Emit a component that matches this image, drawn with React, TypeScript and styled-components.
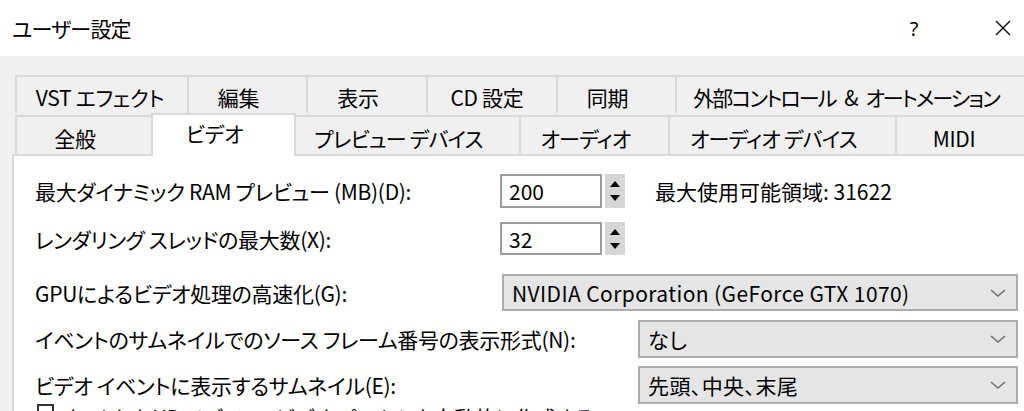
import React from "react";
import styled, { createGlobalStyle } from "styled-components";

const Global = createGlobalStyle`
  html, body { margin: 0; padding: 0; background: #ffffff; overflow: hidden; }
  body { font-family: "Noto Sans CJK JP", "Noto Sans", sans-serif; }
`;

const Window = styled.div`
  width: 1024px;
  height: 411px;
  overflow: hidden;
  display: flex;
  flex-direction: column;
  background: #f0f0f0;
  font-family: "Noto Sans CJK JP", "Noto Sans", sans-serif;
  font-feature-settings: "palt";
  color: #000;
`;

const TitleBar = styled.div`
  height: 56px;
  flex: 0 0 56px;
  background: #ffffff;
  display: flex;
  align-items: center;
  padding-left: 12px;
`;

const Title = styled.div`
  font-size: 21px;
  flex: 1;
  letter-spacing: -0.8px;
`;

const HelpButton = styled.div`
  width: 30px;
  text-align: center;
  font-size: 20px;
  margin-right: 64px;
  font-family: "Noto Sans", sans-serif;
`;

const CloseButton = styled.div`
  width: 20px;
  height: 20px;
  margin-right: 11px;
  display: flex;
  align-items: center;
  justify-content: center;
`;

const Body = styled.div`
  flex: 1;
  display: flex;
  flex-direction: column;
  padding: 19px 0 0 12px;
  min-height: 0;
`;

const TabStrip = styled.div`
  display: flex;
  flex-direction: column;
  margin-left: 3px;
`;

const TabRow = styled.div`
  display: flex;
  align-items: flex-end;
  white-space: nowrap;
`;

const Tab = styled.div<{ $w: number; $h: number; $selected?: boolean; $ls?: number; $pr?: number; $ws?: number }>`
  box-sizing: border-box;
  flex: 0 0 ${(p) => p.$w}px;
  width: ${(p) => p.$w}px;
  height: ${(p) => p.$h}px;
  border-top: 2px solid #d9d9d9;
  border-left: 2px solid #d9d9d9;
  border-right: ${(p) => (p.$selected ? "2px solid #d9d9d9" : "none")};
  background: ${(p) => (p.$selected ? "#ffffff" : "#f0f0f0")};
  margin-right: ${(p) => (p.$selected ? -2 : 0)}px;
  margin-bottom: ${(p) => (p.$selected ? -2 : 0)}px;
  position: ${(p) => (p.$selected ? "relative" : "static")};
  z-index: ${(p) => (p.$selected ? 2 : 0)};
  display: flex;
  align-items: center;
  justify-content: center;
  padding: ${(p) => (p.$selected ? `0 ${p.$pr ?? 18}px 6px 0` : `4px ${p.$pr ?? 18}px 0 0`)};
  font-size: 21px;
  letter-spacing: ${(p) => p.$ls ?? -0.3}px;
  word-spacing: ${(p) => p.$ws ?? 0}px;
`;

const Panel = styled.div`
  flex: 1;
  background: #ffffff;
  border-top: 2px solid #d9d9d9;
  border-left: 2px solid #d9d9d9;
  display: flex;
  flex-direction: column;
  padding: 18px 0 0 21px;
  position: relative;
  z-index: 1;
`;

const Row = styled.div<{ $h: number; $mt: number }>`
  display: flex;
  align-items: center;
  height: ${(p) => p.$h}px;
  margin-top: ${(p) => p.$mt}px;
  white-space: nowrap;
`;

const Label = styled.div<{ $w: number }>`
  flex: 0 0 ${(p) => p.$w}px;
  font-size: 21px;
  letter-spacing: -0.3px;
`;

const SpinInput = styled.div`
  box-sizing: border-box;
  width: 102px;
  height: 100%;
  border: 2px solid #9c9c9c;
  background: #fff;
  display: flex;
  align-items: center;
  padding-left: 7px;
  font-size: 21px;
`;

const SpinButtons = styled.div`
  width: 20px;
  height: 100%;
  margin-left: 3px;
  background: #d6d6d6;
  display: flex;
  flex-direction: column;
  align-items: center;
  justify-content: center;
  gap: 8px;
`;

const Info = styled.div`
  margin-left: 30px;
  font-size: 21px;
`;

const Combo = styled.div<{ $w: number }>`
  box-sizing: border-box;
  width: ${(p) => p.$w}px;
  height: 100%;
  background: #e5e5e5;
  border: 2px solid #adadad;
  display: flex;
  align-items: center;
  padding: 0 10px 0 8px;
  font-size: 21px;
`;

const ComboText = styled.div`
  flex: 1;
  letter-spacing: 0.4px;
`;

const CheckRow = styled.div`
  display: flex;
  align-items: flex-start;
  margin-left: 2px;
  white-space: nowrap;
`;

const CheckBox = styled.div`
  box-sizing: border-box;
  width: 17px;
  height: 17px;
  border: 2px solid #333;
  background: #fff;
`;

const CheckLabel = styled.div`
  margin-left: 10px;
  margin-top: -2px;
  font-size: 21px;
  letter-spacing: -0.4px;
`;

const Chevron = () => (
  <svg width="16" height="10" viewBox="0 0 16 10">
    <polyline points="1,2 8,8 15,2" fill="none" stroke="#707070" strokeWidth="1.6" />
  </svg>
);

const UpArrow = () => (
  <svg width="10" height="6" viewBox="0 0 10 6">
    <polygon points="5,0 10,6 0,6" fill="#000" />
  </svg>
);

const DownArrow = () => (
  <svg width="10" height="6" viewBox="0 0 10 6">
    <polygon points="0,0 10,0 5,6" fill="#000" />
  </svg>
);

type TabDef = { t: string; w: number; s?: boolean; ls?: number; pr?: number; ws?: number };

const topTabs: TabDef[] = [
  { t: "VST エフェクト", w: 172, pr: 4 },
  { t: "編集", w: 119 },
  { t: "表示", w: 120 },
  { t: "CD 設定", w: 130, pr: 10 },
  { t: "同期", w: 119 },
  { t: "外部コントロール & オートメーション", w: 400, ls: -1.9, pr: 60, ws: 6 },
];

const bottomTabs: TabDef[] = [
  { t: "全般", w: 136 },
  { t: "ビデオ", w: 145, s: true },
  { t: "プレビュー デバイス", w: 225, ls: -0.8 },
  { t: "オーディオ", w: 149, ls: -0.8 },
  { t: "オーディオ デバイス", w: 227, ls: -0.8 },
  { t: "MIDI", w: 140, pr: 24 },
];

export default function App() {
  return (
    <>
      <Global />
      <Window>
        <TitleBar>
          <Title>ユーザー設定</Title>
          <HelpButton>?</HelpButton>
          <CloseButton>
            <svg width="16" height="16" viewBox="0 0 16 16">
              <line x1="1" y1="1" x2="15" y2="15" stroke="#111" strokeWidth="1.4" />
              <line x1="15" y1="1" x2="1" y2="15" stroke="#111" strokeWidth="1.4" />
            </svg>
          </CloseButton>
        </TitleBar>
        <Body>
          <TabStrip>
            <TabRow>
              {topTabs.map((d) => (
                <Tab key={d.t} $w={d.w} $h={38} $ls={d.ls} $pr={d.pr} $ws={d.ws}>
                  {d.t}
                </Tab>
              ))}
            </TabRow>
            <TabRow>
              {bottomTabs.map((d) => (
                <Tab key={d.t} $w={d.w} $h={d.s ? 43 : 39} $selected={d.s} $ls={d.ls} $pr={d.pr} $ws={d.ws}>
                  {d.t}
                </Tab>
              ))}
            </TabRow>
          </TabStrip>
          <Panel>
            <Row $h={34} $mt={0}>
              <Label $w={465}>最大ダイナミック RAM プレビュー (MB)(D):</Label>
              <SpinInput>200</SpinInput>
              <SpinButtons>
                <UpArrow />
                <DownArrow />
              </SpinButtons>
              <Info>最大使用可能領域: 31622</Info>
            </Row>
            <Row $h={33} $mt={14}>
              <Label $w={465}>レンダリング スレッドの最大数(X):</Label>
              <SpinInput>32</SpinInput>
              <SpinButtons>
                <UpArrow />
                <DownArrow />
              </SpinButtons>
            </Row>
            <Row $h={37} $mt={19}>
              <Label $w={467}>GPUによるビデオ処理の高速化(G):</Label>
              <Combo $w={516}>
                <ComboText>NVIDIA Corporation (GeForce GTX 1070)</ComboText>
                <Chevron />
              </Combo>
            </Row>
            <Row $h={38} $mt={9}>
              <Label $w={603}>イベントのサムネイルでのソース フレーム番号の表示形式(N):</Label>
              <Combo $w={380}>
                <ComboText>なし</ComboText>
                <Chevron />
              </Combo>
            </Row>
            <Row $h={38} $mt={8}>
              <Label $w={603}>ビデオ イベントに表示するサムネイル(E):</Label>
              <Combo $w={380}>
                <ComboText>先頭、中央、末尾</ComboText>
                <Chevron />
              </Combo>
            </Row>
            <CheckRow>
              <CheckBox />
              <CheckLabel>カットしたHD メディアのビデオ プロキシを自動的に作成する</CheckLabel>
            </CheckRow>
          </Panel>
        </Body>
      </Window>
    </>
  );
}
